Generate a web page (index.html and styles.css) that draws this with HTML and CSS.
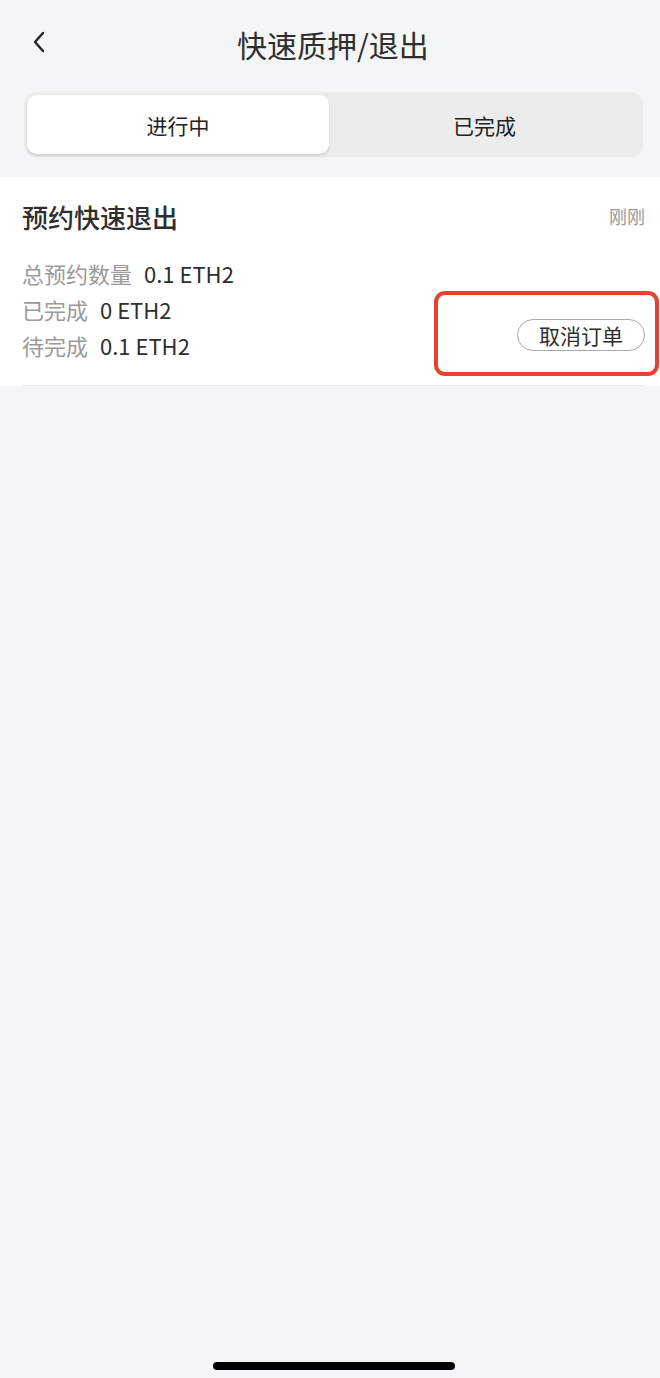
FILE: index.html
```html
<!DOCTYPE html>
<html lang="zh">
<head>
<meta name="viewport" content="width=device-width, initial-scale=1">
<link rel="stylesheet" href="styles.css">
</head>
<body>
	<div id="page">
		<div id="navBar">
			<svg class="back" width="16" height="24" viewBox="0 0 16 24"><path d="M12 3 L4 12 L12 21" fill="none" stroke="#222" stroke-width="2.4" stroke-linecap="round" stroke-linejoin="round"/></svg>
			<div class="title">快速质押/退出</div>
		</div>

		<div id="tabs">
			<div class="tab active">进行中</div>
			<div class="tab">已完成</div>
		</div>

		<div class="order">
			<div class="orderHead">
				<span class="orderTitle">预约快速退出</span>
				<span class="orderTime">刚刚</span>
			</div>
			<div class="orderBody">
				<div class="rows">
					<div class="row"><span class="label">总预约数量</span><span class="value">0.1 ETH2</span></div>
					<div class="row"><span class="label">已完成</span><span class="value">0 ETH2</span></div>
					<div class="row"><span class="label">待完成</span><span class="value">0.1 ETH2</span></div>
				</div>
				<div class="action">
					<button class="cancel">取消订单</button>
					<div class="mark"></div>
				</div>
			</div>
			<div class="divider"></div>
		</div>

		<div class="spacer"></div>
		<div id="homeBar"></div>
	</div>
</body>
</html>
```

FILE: styles.css
```css
:root {
	--bg:#f4f5f7;
	--text:#2e2e2e;
	--muted:#9a9a9a;
	--red:#e8412c;
}

* {
	box-sizing:border-box;
	font-family:"Noto Sans CJK SC", "Noto Sans", sans-serif;
}

html, body {
	margin:0;
	height:100%;
	background-color:var(--bg);
}

#page{
	display:flex;
	flex-direction:column;
	min-height:1378px;
}

#navBar{
	position:relative;
	height:88px;
	display:flex;
	align-items:center;
	justify-content:center;
}
#navBar .back{
	position:absolute;
	left:31px;
	top:30px;
}
#navBar .title{
	font-size:30px;
	color:var(--text);
	margin-left:6px;
	line-height:1;
}

#tabs{
	margin:4px 17px 20px 24px;
	height:65px;
	padding:3px;
	border-radius:12px;
	background-color:#ececec;
	display:flex;
}
.tab{
	flex:1;
	display:flex;
	align-items:center;
	justify-content:center;
	font-size:21px;
	color:#222;
	border-radius:10px;
}
.tab.active{
	flex:0 0 302px;
	background-color:white;
	box-shadow:0 2px 3px rgba(0,0,0,0.12);
}

.order{
	background-color:white;
	padding:0 15px 0 22px;
}
.orderHead{
	display:flex;
	justify-content:space-between;
	align-items:center;
	height:78px;
}
.orderTitle{
	font-size:26px;
	font-weight:500;
	color:var(--text);
}
.orderTime{
	font-size:18px;
	color:var(--muted);
}
.orderBody{
	display:flex;
	justify-content:space-between;
}
.rows{
	padding-bottom:22px;
}
.row{
	height:36px;
	line-height:36px;
	font-size:22px;
}
.label{
	color:var(--muted);
	margin-right:12px;
}
.value{
	color:var(--text);
}
.action{
	position:relative;
	display:flex;
	align-items:flex-end;
	padding-bottom:34px;
}
.cancel{
	height:32px;
	width:128px;
	background:white;
	border:1.5px solid #aaaaaa;
	border-radius:16px;
	font-size:21px;
	color:var(--text);
	padding:0;
	line-height:28px;
}
.mark{
	position:absolute;
	left:-83px;
	right:-14px;
	top:36px;
	height:85px;
	border:4px solid var(--red);
	border-radius:11px;
}
.divider{
	height:1px;
	background-color:#ececec;
}

.spacer{
	flex:1;
}
#homeBar{
	width:242px;
	height:8px;
	border-radius:4px;
	background-color:black;
	margin:0 0 8px 213px;
}
```
